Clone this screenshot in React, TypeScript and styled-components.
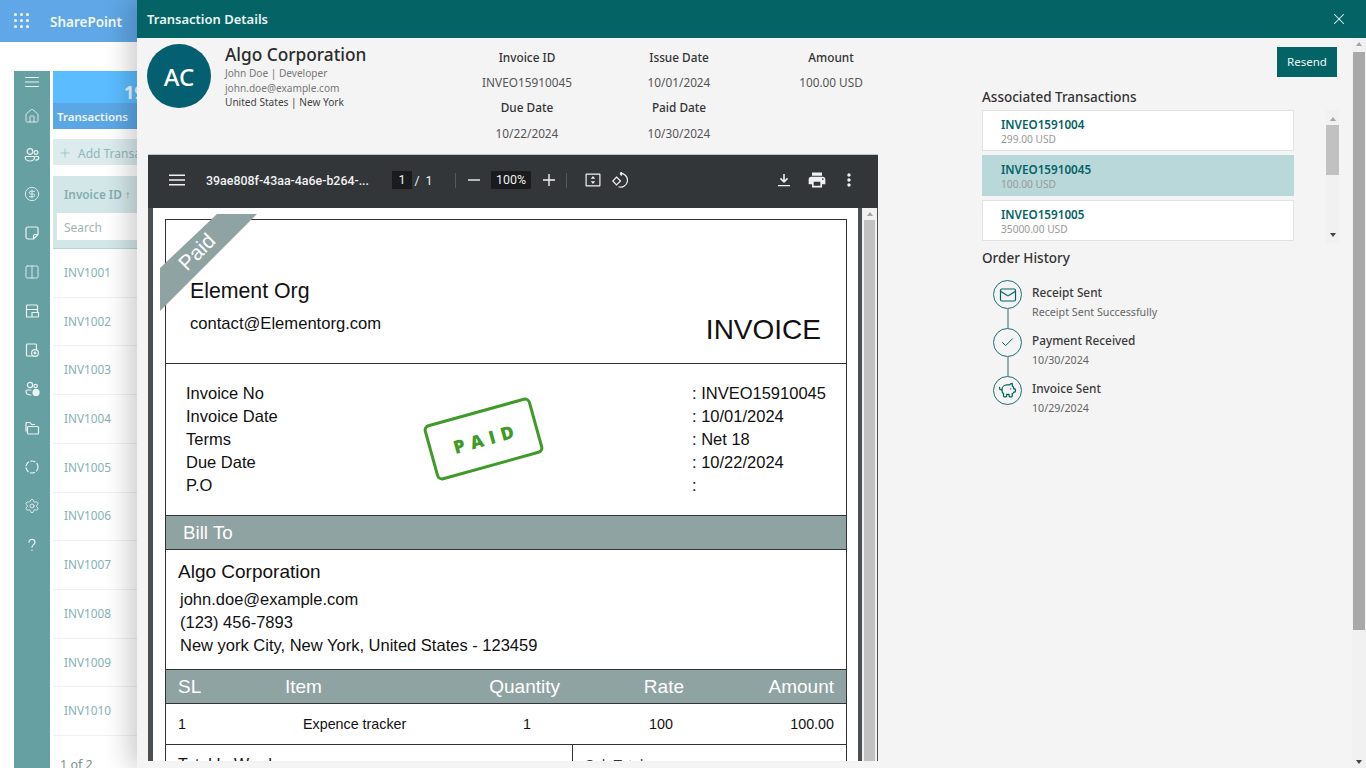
import React from "react";
import styled, { createGlobalStyle } from "styled-components";
import { CircleDollarSign, Columns2, House, Mail, Check, PiggyBank, Settings, X, Plus } from "lucide-react";

const ui = `"Noto Sans", "Open Sans", sans-serif`;
const pdf = `"Liberation Sans", Arial, sans-serif`;
const teal = "#036365";
const band = "#8fa3a3";

const Global = createGlobalStyle`
  html, body { margin: 0; padding: 0; background: #fff; overflow: hidden; }
  * { box-sizing: border-box; }
`;

const Screen = styled.div`
  position: relative; width: 1366px; height: 768px; overflow: hidden; background: #fff; font-family: ${ui};
`;
const SuiteBar = styled.header`
  height: 42px; background: #5fa7e6; display: flex; align-items: center; padding-left: 14px; padding-bottom: 1px; color: #fff;
`;
const Waffle = styled.svg`width: 15px; height: 15px; fill: #fff; flex: none;`;
const SuiteName = styled.span`margin-left: 21px; font-size: 13.5px; font-weight: 600; color: #f2f8fd; padding-top: 2px;`;
const PageBody = styled.div`
  display: flex; height: 697px; margin-top: 29px; padding-left: 14px; gap: 3px;
`;
const Rail = styled.nav`
  width: 36px; height: 100%; background: #67a0a3; display: flex; flex-direction: column; align-items: center; padding-top: 1px; flex: none;
`;
const RailItem = styled.div`
  height: 39px; flex: none; display: flex; align-items: center; justify-content: center; color: #eaf3f3;
  &:first-child { height: 20px; margin-bottom: 4.5px; }
`;
const RailSvg = styled.svg`width: 16px; height: 16px; fill: none; stroke: currentColor; stroke-width: 1.2; stroke-linecap: round; stroke-linejoin: round;`;
const Main = styled.main`flex: 1; min-width: 0; display: flex; flex-direction: column;`;
const Hero = styled.div`height: 58px; flex: none; background: #5bbcff; display: flex; flex-direction: column;`;
const HeroNum = styled.div`height: 32px; padding: 9px 0 0 71px; font-size: 18px; line-height: 24px; font-weight: 700; color: #eaf6ff;`;
const HeroTab = styled.div`height: 26px; background: #5ba7e6; color: #eef6fd; font-size: 11.5px; font-weight: 600; line-height: 28px; padding-left: 4px; white-space: nowrap;`;
const AddBar = styled.div`
  height: 26px; flex: none; margin-top: 10px; background: #dcebec; color: #8db8bb; font-size: 12px; display: flex; align-items: center; padding: 2px 0 0 5px; gap: 6px; white-space: nowrap; overflow: hidden;
`;
const HeadCell = styled.div`
  height: 73px; flex: none; margin-top: 11px; background: #d4e7e8; border-bottom: 1px solid #b7d5d7; padding: 10px 0 0 4px;
`;
const HeadLabel = styled.div`height: 17px; line-height: 17px; padding-left: 7px; font-size: 11.8px; font-weight: 600; color: #82adb0; white-space: nowrap;`;
const SearchBox = styled.div`height: 27px; margin-top: 10px; background: #fff; color: #a5b4b5; font-size: 12px; line-height: 30px; padding-left: 7px;`;
const Row = styled.div`
  height: 48.72px; flex: none; border-bottom: 1px solid #edf1f1; display: flex; align-items: center; padding-left: 11px; padding-bottom: 2px; font-size: 11.8px; color: #86b2b5;
`;
const Pager = styled.div`flex: none; padding: 20px 0 0 7px; font-size: 12.5px; color: #7d8f90; white-space: nowrap;`;

const Drawer = styled.aside`
  position: absolute; left: 137px; top: 0; width: 1229px; height: 768px; background: #f4f4f4; display: flex; flex-direction: column;
  box-shadow: -8px 0 24px rgba(0, 0, 0, .2);
`;
const DrawerHead = styled.div`
  height: 38px; flex: none; background: ${teal}; color: #eaf5f5; display: flex; align-items: center; justify-content: space-between; padding: 0 18px 0 10px; font-size: 13px; font-weight: 600;
`;
const DrawerBody = styled.div`flex: 1; min-height: 0; display: flex; padding-left: 10px;`;
const LeftCol = styled.div`width: 732px; flex: none; display: flex; flex-direction: column;`;
const Summary = styled.section`height: 116px; flex: none; padding-top: 6px; display: flex;`;
const Avatar = styled.div`
  width: 64px; height: 64px; border-radius: 50%; background: #045f70; color: #fff; display: flex; align-items: center; justify-content: center; font-size: 24px; font-weight: 500; flex: none;
`;
const Company = styled.div`width: 240px; flex: none; padding-left: 14px;`;
const CompanyName = styled.div`font-size: 17.3px; line-height: 22px; color: #2b2b2b; font-weight: 500; white-space: nowrap;`;
const CompanyLine = styled.div<{ $dark?: boolean }>`font-size: 10.1px; line-height: 14.5px; color: ${p => (p.$dark ? "#444" : "#777")}; white-space: nowrap;`;
const MetaGrid = styled.div`display: grid; grid-template-columns: repeat(3, 152px); grid-auto-rows: 25.33px; align-items: center; text-align: center;`;
const MetaLabel = styled.div`font-size: 11.8px; font-weight: 500; color: #333;`;
const MetaValue = styled.div`font-size: 11.8px; color: #555;`;

const Viewer = styled.section`
  margin-left: 1px; width: 730px; height: 607px; flex: none; border-top: 1px solid #c4c4c4; display: flex; flex-direction: column; overflow: hidden; background: #4b4f51;
`;
const PdfBar = styled.div`
  height: 53px; flex: none; background: #323639; color: #f1f1f1; display: flex; align-items: center; font-family: Roboto, sans-serif; font-size: 12.4px; padding: 0 19px 3px 21px;
`;
const PdfFile = styled.span`margin-left: 21px; width: 186px; font-weight: 500; white-space: nowrap; flex: none;`;
const PageInput = styled.span`width: 20px; height: 18px; background: #191b1c; text-align: center; line-height: 18px; flex: none;`;
const PdfText = styled.span<{ $w: number }>`width: ${p => p.$w}px; flex: none; text-align: center;`;
const PdfDivider = styled.span<{ $ml: number }>`width: 1px; height: 15px; background: #55595c; flex: none; margin-left: ${p => p.$ml}px;`;
const ZoomBox = styled.span`width: 40px; height: 18px; background: #191b1c; text-align: center; line-height: 18px; flex: none; margin: 0 12px 0 11px;`;
const PdfSvg = styled.svg<{ $ml?: number; $s?: number }>`width: ${p => p.$s ?? 16}px; height: ${p => p.$s ?? 16}px; margin-left: ${p => p.$ml ?? 0}px; flex: none; fill: currentColor;`;
const PdfLineSvg = styled(PdfSvg)`fill: none; stroke: currentColor; stroke-width: 1.2;`;
const PdfSpacer = styled.span`flex: 1;`;
const PdfMain = styled.div`flex: 1; min-height: 0; display: flex; padding-left: 5px;`;
const PdfPage = styled.div`
  position: relative; width: 705px; background: #fff; padding: 11px 11px 0 12px; flex: none; overflow: hidden; font-family: ${pdf}; color: #111;
`;
const PdfScroll = styled.div`margin-left: 4px; width: 15px; background: #f1f1f1; display: flex; flex-direction: column; padding: 0 2px;`;
const ArrowUp = styled.div`
  width: 0; height: 0; margin: 4px auto 4px; border-left: 3.5px solid transparent; border-right: 3.5px solid transparent; border-bottom: 4px solid #a3a3a3; flex: none;
`;
const ArrowDown = styled.div`
  width: 0; height: 0; margin: 5px auto 4px; border-left: 3.5px solid transparent; border-right: 3.5px solid transparent; border-top: 4px solid #444; flex: none;
`;
const PdfThumb = styled.div`flex: 1; background: #c1c1c1;`;

const Sheet = styled.div`border: 1px solid #333; border-bottom: none; height: 560px; display: flex; flex-direction: column;`;
const Ribbon = styled.div`
  position: absolute; left: 7px; top: 6px; width: 97px; height: 97px; background: ${band};
  clip-path: polygon(57px 0, 97px 0, 0 97px, 0 54px);
`;
const RibbonText = styled.span`
  position: absolute; left: 23px; top: 32px; color: #fff; font-size: 21px; line-height: 24px; transform: rotate(-45deg);
`;
const OrgSection = styled.div`
  height: 144px; flex: none; border-bottom: 1px solid #333; display: flex; justify-content: space-between; align-items: flex-end; padding: 0 25px 17px 24px;
`;
const OrgBlock = styled.div`margin-bottom: 11px;`;
const OrgName = styled.div`font-size: 21.3px; line-height: 26px;`;
const OrgMail = styled.div`font-size: 16.6px; line-height: 20px; margin-top: 10px; margin-bottom: 1px;`;
const InvoiceTitle = styled.div`font-size: 28px; line-height: 32px;`;
const InfoSection = styled.div`
  position: relative; height: 152px; flex: none; border-bottom: 1px solid #333; display: flex; justify-content: space-between; padding: 18px 20px 0 20px; font-size: 16.5px; line-height: 23.1px;
`;
const InfoValues = styled.div`width: 134px;`;
const Stamp = styled.div`
  position: absolute; left: 261.5px; top: 45.5px; width: 111px; height: 58px; border: 3px solid #3f9a28; border-radius: 6px; transform: rotate(-15.5deg);
  display: flex; align-items: center; justify-content: center; color: #3f9a28; font: 800 18px "Open Sans", sans-serif; letter-spacing: 6px; padding-left: 6px;
`;
const BandTitle = styled.div`
  height: 34px; flex: none; background: ${band}; color: #fff; font-size: 18.8px; line-height: 33px; padding-left: 17px; border-bottom: 1px solid #333;
`;
const BillSection = styled.div`height: 120px; flex: none; border-bottom: 1px solid #333; padding: 10px 0 0 12px;`;
const BillName = styled.div`font-size: 19px; line-height: 24px; margin-bottom: 4px;`;
const BillLine = styled.div`font-size: 16.5px; line-height: 23.2px; padding-left: 2px;`;
const ItemGrid = styled.div`
  display: grid; grid-template-columns: 107px 137px 138px 124px 1fr; height: 34px; flex: none; align-items: center; padding: 0 12px; background: ${band}; color: #fff; font-size: 19px; border-bottom: 1px solid #333;
`;
const ItemRow = styled(ItemGrid)`
  height: 41px; background: #fff; color: #111; font-size: 14.3px; border-bottom: 1px solid #333;
`;
const Cell = styled.div<{ $a?: string; $pl?: number }>`text-align: ${p => p.$a ?? "left"}; padding-left: ${p => p.$pl ?? 0}px; white-space: nowrap;`;
const Totals = styled.div`flex: 1; display: grid; grid-template-columns: 407px 1fr; font-size: 16px;`;
const TotalCell = styled.div`padding: 10px 12px; line-height: 20px; &:first-child { border-right: 1px solid #333; }`;
const SubCell = styled(TotalCell)`font-size: 14px; color: #333;`;

const RightCol = styled.div`flex: 1; min-width: 0; padding: 9px 15px 0 103px; display: flex; flex-direction: column;`;
const ResendRow = styled.div`display: flex; justify-content: flex-end; height: 30px;`;
const Resend = styled.button`
  width: 60px; height: 30px; border: 0; padding: 0 0 2px; background: ${teal}; color: #eef7f7; font: 400 11.5px ${ui};
`;
const SideTitle = styled.div`font-size: 13.5px; line-height: 20px; font-weight: 500; color: #333;`;
const AssocTitle = styled(SideTitle)`margin-top: 10px;`;
const HistTitle = styled(SideTitle)`margin-top: 5px;`;
const AssocWrap = styled.div`display: flex; gap: 32px; margin-top: 3px; height: 133px;`;
const AssocList = styled.div`width: 312px; flex: none; display: flex; flex-direction: column; gap: 4px;`;
const AssocItem = styled.div<{ $on?: boolean }>`
  height: 41px; flex: none; padding: 5px 0 0 18px; background: ${p => (p.$on ? "#b8d8da" : "#fff")}; border: 1px solid ${p => (p.$on ? "#b8d8da" : "#e2e2e2")};
`;
const AssocId = styled.div`font-size: 11.7px; line-height: 17px; font-weight: 600; color: ${teal};`;
const AssocAmt = styled.div`font-size: 10.2px; line-height: 13px; color: #999;`;
const AssocScroll = styled.div`width: 13px; flex: none; background: #f1f1f1; display: flex; flex-direction: column; padding: 3px 0 2px;`;
const AssocThumb = styled.div`height: 50px; flex: none; background: #c1c1c1;`;
const Fill = styled.div`flex: 1;`;
const Timeline = styled.div`margin: 12px 0 0 11px; display: flex; flex-direction: column;`;
const Step = styled.div`display: flex; gap: 10px; height: 48px;`;
const Node = styled.div`width: 29px; flex: none; display: flex; flex-direction: column; align-items: center;`;
const Circle = styled.div`
  width: 29px; height: 29px; flex: none; border: 1.8px solid #1c6f70; border-radius: 50%; display: flex; align-items: center; justify-content: center; color: ${teal};
`;
const Connector = styled.div`width: 2px; flex: 1; background: #8fb0b2;`;
const StepTitle = styled.div`font-size: 11.8px; line-height: 18px; margin-top: 3px; font-weight: 500; color: #3a3a3a;`;
const StepSub = styled.div`font-size: 10.7px; line-height: 16px; margin-top: 3px; color: #666;`;
const PageScroll = styled.div`width: 14px; flex: none; background: #f1f1f1; display: flex; flex-direction: column;`;
const PageThumb = styled.div`height: 578px; flex: none; background: #a8a8a8; margin: 2px 1px 0;`;

const dots = [0, 1, 2].flatMap(y => [0, 1, 2].map(x => [x * 6 + 1.5, y * 6 + 1.5]));
const ru = { viewBox: "0 0 16 16" };
const railIcons: React.ReactNode[] = [
  <RailSvg {...ru} key="m"><path d="M1.5 3.5h13M1.5 8h13M1.5 12.5h13" /></RailSvg>,
  <House key="h" size={16} strokeWidth={1.3} />,
  <RailSvg {...ru} key="u"><circle cx="6" cy="4.5" r="2.8" /><circle cx="12" cy="5.5" r="1.9" /><path d="M2 9.5h7.5a1 1 0 0 1 1 1c0 2-2 3.5-4.5 3.5S1.2 12.5 1.2 10.5a1 1 0 0 1 .8-1zM11 9.5h2.8a1 1 0 0 1 1 1c0 1.6-1.4 2.6-3.3 2.6" /></RailSvg>,
  <CircleDollarSign key="d" size={16} strokeWidth={1.3} />,
  <RailSvg {...ru} key="s"><path d="M4 2h8.500A1.500 1.500 0 0 1 14 3.500V9.500L9.500 14H4a2 2 0 0 1-2-2V4a2 2 0 0 1 2-2zM14 9.500h-3a1.500 1.500 0 0 0-1.500 1.500v3" /></RailSvg>,
  <Columns2 key="c" size={16} strokeWidth={1.3} />,
  <RailSvg {...ru} key="f"><path d="M2.500 14V3a1 1 0 0 1 1-1h9a1 1 0 0 1 1 1v6M2.500 6.500h11M2.500 14h4.500M8 9.500h6.500V13a1 1 0 0 1-1 1H8z" /></RailSvg>,
  <RailSvg {...ru} key="l"><path d="M8 14H3.500a1 1 0 0 1-1-1V3a1 1 0 0 1 1-1h8a1 1 0 0 1 1 1v4" /><circle cx="11" cy="11" r="3.400" /><circle cx="11" cy="11" r=".8" /></RailSvg>,
  <RailSvg {...ru} key="p"><circle cx="6" cy="4" r="2.600" /><circle cx="11.600" cy="5" r="1.700" /><path d="M7 9H3.200a1.200 1.200 0 0 0-1.200 1.200C2 12.400 4 14 7 14" /><circle cx="12" cy="11.400" r="3" fill="currentColor" /></RailSvg>,
  <RailSvg {...ru} key="o"><path d="M2 7V3.500a1 1 0 0 1 1-1h3l1.500 2h3M4.500 6.500h9a1 1 0 0 1 1 1V13a1 1 0 0 1-1 1h-9a1 1 0 0 1-1-1V7.500a1 1 0 0 1 1-1zM2 3v8" /></RailSvg>,
  <RailSvg {...ru} key="r" strokeDasharray="4.200 2.400"><circle cx="8" cy="8" r="6" /></RailSvg>,
  <Settings key="g" size={16} strokeWidth={1.3} />,
  <RailSvg {...ru} key="q"><path d="M5 5.200C5 3.500 6.300 2.300 8 2.300s3 1.200 3 2.900c0 2.300-3 2.500-3 5M8 13.200v.3" /></RailSvg>,
];
const invoices = Array.from({ length: 10 }, (_, i) => `INV${1001 + i}`);

export default function App() {
  return (
    <Screen>
      <Global />
      <SuiteBar>
        <Waffle viewBox="0 0 15 15">{dots.map(([x, y]) => <circle key={`${x}-${y}`} cx={x} cy={y} r="1.5" />)}</Waffle>
        <SuiteName>SharePoint</SuiteName>
      </SuiteBar>
      <PageBody>
        <Rail>{railIcons.map((ic, i) => <RailItem key={i}>{ic}</RailItem>)}</Rail>
        <Main>
          <Hero><HeroNum>19</HeroNum><HeroTab>Transactions</HeroTab></Hero>
          <AddBar><Plus size={14} strokeWidth={1.2} />Add Transaction</AddBar>
          <HeadCell><HeadLabel>Invoice ID ↑</HeadLabel><SearchBox>Search</SearchBox></HeadCell>
          {invoices.map(v => <Row key={v}>{v}</Row>)}
          <Pager>1 of 2</Pager>
        </Main>
      </PageBody>

      <Drawer>
        <DrawerHead>Transaction Details<X size={18} strokeWidth={1.4} /></DrawerHead>
        <DrawerBody>
          <LeftCol>
            <Summary>
              <Avatar>AC</Avatar>
              <Company>
                <CompanyName>Algo Corporation</CompanyName>
                <CompanyLine>John Doe | Developer</CompanyLine>
                <CompanyLine>john.doe@example.com</CompanyLine>
                <CompanyLine $dark>United States | New York</CompanyLine>
              </Company>
              <MetaGrid>
                <MetaLabel>Invoice ID</MetaLabel><MetaLabel>Issue Date</MetaLabel><MetaLabel>Amount</MetaLabel>
                <MetaValue>INVEO15910045</MetaValue><MetaValue>10/01/2024</MetaValue><MetaValue>100.00 USD</MetaValue>
                <MetaLabel>Due Date</MetaLabel><MetaLabel>Paid Date</MetaLabel><span />
                <MetaValue>10/22/2024</MetaValue><MetaValue>10/30/2024</MetaValue><span />
              </MetaGrid>
            </Summary>
            <Viewer>
              <PdfBar>
                <PdfSvg viewBox="0 0 16 16"><path d="M0 2.500h16v1.500H0zM0 7.250h16v1.500H0zM0 12h16v1.500H0z" /></PdfSvg>
                <PdfFile>39ae808f-43aa-4a6e-b264-...</PdfFile>
                <PageInput>1</PageInput>
                <PdfText $w={10}>/</PdfText>
                <PdfText $w={14}>1</PdfText>
                <PdfDivider $ml={19} />
                <PdfSvg viewBox="0 0 12 12" $ml={12} $s={12}><path d="M0 5.300h12v1.400H0z" /></PdfSvg>
                <ZoomBox>100%</ZoomBox>
                <PdfSvg viewBox="0 0 12 12" $s={12}><path d="M0 5.300h12v1.400H0zM5.300 0h1.400v12H5.300z" /></PdfSvg>
                <PdfDivider $ml={11} />
                <PdfSvg viewBox="0 0 16 16" $ml={18} $s={16}><path fillRule="evenodd" d="M1.500 1.500h13a1 1 0 0 1 1 1v11a1 1 0 0 1-1 1h-13a1 1 0 0 1-1-1v-11a1 1 0 0 1 1-1zm.2 1.200v10.600h12.600V2.700zM8 4l2.200 2.800H5.800zM8 12 5.800 9.200h4.400z" /></PdfSvg>
                <PdfLineSvg viewBox="0 0 16 16" $ml={11} $s={16}><path d="M4.500 5 8.500 9 4.500 13 .8 9zM8 1.500a6.800 6.800 0 1 1-1.500 13.200M8 1.500 10 0M8 1.500l1.800 2" /></PdfLineSvg>
                <PdfSpacer />
                <PdfSvg viewBox="0 0 14 14" $s={14}><path d="M6.200 1h1.600v6l2.200-2.200 1.100 1.100L7 10 2.900 5.900 4 4.800 6.200 7zM1 12h12v1.300H1z" /></PdfSvg>
                <PdfSvg viewBox="0 0 24 24" $ml={16} $s={20}><path d="M19 8H5c-1.660 0-3 1.340-3 3v6h4v4h12v-4h4v-6c0-1.660-1.340-3-3-3zm-3 11H8v-5h8v5zm3-7c-.55 0-1-.45-1-1s.45-1 1-1 1 .45 1 1-.45 1-1 1zm-1-9H6v4h12V3z" /></PdfSvg>
                <PdfSvg viewBox="0 0 24 24" $ml={12} $s={20}><path d="M12 8c1.100 0 2-.9 2-2s-.9-2-2-2-2 .9-2 2 .9 2 2 2zm0 2c-1.100 0-2 .9-2 2s.9 2 2 2 2-.9 2-2-.9-2-2-2zm0 6c-1.100 0-2 .9-2 2s.9 2 2 2 2-.9 2-2-.9-2-2-2z" /></PdfSvg>
              </PdfBar>
              <PdfMain>
                <PdfPage>
                  <Sheet>
                    <OrgSection>
                      <OrgBlock><OrgName>Element Org</OrgName><OrgMail>contact@Elementorg.com</OrgMail></OrgBlock>
                      <InvoiceTitle>INVOICE</InvoiceTitle>
                    </OrgSection>
                    <InfoSection>
                      <div><div>Invoice No</div><div>Invoice Date</div><div>Terms</div><div>Due Date</div><div>P.O</div></div>
                      <Stamp>PAID</Stamp>
                      <InfoValues><div>: INVEO15910045</div><div>: 10/01/2024</div><div>: Net 18</div><div>: 10/22/2024</div><div>:</div></InfoValues>
                    </InfoSection>
                    <BandTitle>Bill To</BandTitle>
                    <BillSection>
                      <BillName>Algo Corporation</BillName>
                      <BillLine>john.doe@example.com</BillLine>
                      <BillLine>(123) 456-7893</BillLine>
                      <BillLine>New york City, New York, United States - 123459</BillLine>
                    </BillSection>
                    <ItemGrid><Cell>SL</Cell><Cell>Item</Cell><Cell $a="right">Quantity</Cell><Cell $a="right">Rate</Cell><Cell $a="right">Amount</Cell></ItemGrid>
                    <ItemRow><Cell>1</Cell><Cell $pl={18}>Expence tracker</Cell><Cell $pl={101}>1</Cell><Cell $pl={89}>100</Cell><Cell $a="right">100.00</Cell></ItemRow>
                    <Totals><TotalCell>Total In Words</TotalCell><SubCell>Sub Total</SubCell></Totals>
                  </Sheet>
                  <Ribbon />
                  <RibbonText>Paid</RibbonText>
                </PdfPage>
                <PdfScroll><ArrowUp /><PdfThumb /></PdfScroll>
              </PdfMain>
            </Viewer>
          </LeftCol>
          <RightCol>
            <ResendRow><Resend>Resend</Resend></ResendRow>
            <AssocTitle>Associated Transactions</AssocTitle>
            <AssocWrap>
              <AssocList>
                <AssocItem><AssocId>INVEO1591004</AssocId><AssocAmt>299.00 USD</AssocAmt></AssocItem>
                <AssocItem $on><AssocId>INVEO15910045</AssocId><AssocAmt>100.00 USD</AssocAmt></AssocItem>
                <AssocItem><AssocId>INVEO1591005</AssocId><AssocAmt>35000.00 USD</AssocAmt></AssocItem>
              </AssocList>
              <AssocScroll><ArrowUp /><AssocThumb /><Fill /><ArrowDown /></AssocScroll>
            </AssocWrap>
            <HistTitle>Order History</HistTitle>
            <Timeline>
              <Step><Node><Circle><Mail size={18} strokeWidth={1.6} /></Circle><Connector /></Node><div><StepTitle>Receipt Sent</StepTitle><StepSub>Receipt Sent Successfully</StepSub></div></Step>
              <Step><Node><Circle><Check size={15} strokeWidth={1.6} /></Circle><Connector /></Node><div><StepTitle>Payment Received</StepTitle><StepSub>10/30/2024</StepSub></div></Step>
              <Step><Node><Circle><PiggyBank size={19} strokeWidth={1.6} /></Circle></Node><div><StepTitle>Invoice Sent</StepTitle><StepSub>10/29/2024</StepSub></div></Step>
            </Timeline>
          </RightCol>
          <PageScroll><ArrowUp /><PageThumb /><Fill /><ArrowDown /></PageScroll>
        </DrawerBody>
      </Drawer>
    </Screen>
  );
}
